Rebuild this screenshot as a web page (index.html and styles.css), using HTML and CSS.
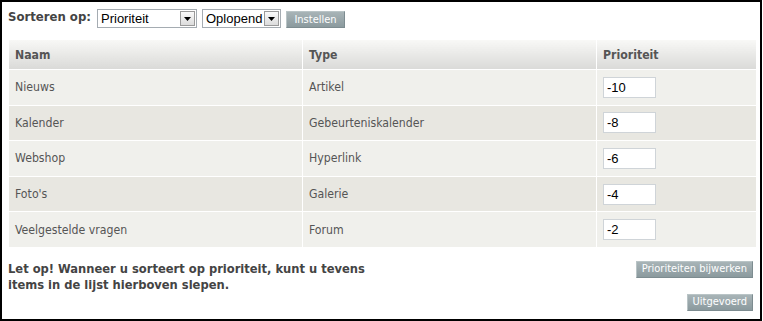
FILE: index.html
```html
<!DOCTYPE html>
<html lang="nl">
<head>
    <meta charset="UTF-8" />
    <title>Sorteren</title>
    <link rel="stylesheet" href="styles.css">
</head>
<body>

<div class="frame">
    <form class="sort-bar">
        <span class="sort-label">Sorteren op:</span>
        <div class="select select-field">
            <span class="select-value">Prioriteit</span>
            <span class="select-arrow"><svg width="7" height="4" viewBox="0 0 7 4"><path d="M0 0h7L3.5 4z" fill="#000"/></svg></span>
        </div>
        <div class="select select-order">
            <span class="select-value">Oplopend</span>
            <span class="select-arrow"><svg width="7" height="4" viewBox="0 0 7 4"><path d="M0 0h7L3.5 4z" fill="#000"/></svg></span>
        </div>
        <button type="button" class="btn">Instellen</button>
    </form>

    <table class="items">
        <thead>
            <tr>
                <th class="col-name">Naam</th>
                <th class="col-type">Type</th>
                <th class="col-prio">Prioriteit</th>
            </tr>
        </thead>
        <tbody>
            <tr>
                <td>Nieuws</td>
                <td>Artikel</td>
                <td><input type="text" value="-10"></td>
            </tr>
            <tr>
                <td>Kalender</td>
                <td>Gebeurteniskalender</td>
                <td><input type="text" value="-8"></td>
            </tr>
            <tr>
                <td>Webshop</td>
                <td>Hyperlink</td>
                <td><input type="text" value="-6"></td>
            </tr>
            <tr>
                <td>Foto's</td>
                <td>Galerie</td>
                <td><input type="text" value="-4"></td>
            </tr>
            <tr>
                <td>Veelgestelde vragen</td>
                <td>Forum</td>
                <td><input type="text" value="-2"></td>
            </tr>
        </tbody>
    </table>

    <div class="footer">
        <p class="note">Let op! Wanneer u sorteert op prioriteit, kunt u tevens items in de lijst hierboven slepen.</p>
        <div class="actions">
            <button type="button" class="btn">Prioriteiten bijwerken</button>
            <button type="button" class="btn">Uitgevoerd</button>
        </div>
    </div>
</div>

</body>
</html>
```

FILE: styles.css
```css
body {
  margin: 0;
  background: #fff;
  font-family: "DejaVu Sans Condensed", "DejaVu Sans", sans-serif;
  color: #555;
}
.frame {
  width: 758px;
  height: 317px;
  border: 2px solid #000;
}
.sort-bar {
  display: flex;
  align-items: center;
  margin: 0;
  padding: 7px 0 0 6px;
  height: 19px;
}
.sort-label {
  width: 89px;
  font-size: 13px;
  font-weight: bold;
  color: #444;
  position: relative;
  top: -2px;
}
.select {
  display: flex;
  align-items: center;
  justify-content: space-between;
  box-sizing: border-box;
  height: 19px;
  border: 1px solid #a5acb2;
  background: #fff;
  padding: 0 1px 0 3px;
  font-family: "Liberation Sans", Arial, sans-serif;
  font-size: 13px;
  color: #000;
}
.select-field {
  width: 100px;
  margin-right: 5px;
}
.select-order {
  width: 79px;
  margin-right: 5px;
}
.select-arrow {
  display: flex;
  align-items: center;
  justify-content: center;
  box-sizing: border-box;
  width: 15px;
  height: 15px;
  border: 1px solid #9a9a9a;
  background: linear-gradient(#fafafa, #dcdcdc);
}
.btn {
  font-family: "DejaVu Sans Condensed", "DejaVu Sans", sans-serif;
  font-size: 11px;
  color: #fff;
  height: 17px;
  padding: 0 5px;
  border: 1px solid;
  border-color: #b9c4c6 #7d8c90 #7d8c90 #b9c4c6;
  background: linear-gradient(#a8b4b7, #8b9a9e);
  line-height: 14px;
  cursor: pointer;
}
.sort-bar .btn {
  width: 59px;
  margin-top: 2px;
}
.items {
  margin: 12px 0 0 7px;
  width: 747px;
  border-collapse: collapse;
  font-size: 12.2px;
}
.items th {
  height: 29px;
  padding: 0 6px;
  text-align: left;
  font-size: 12.2px;
  color: #555;
  background: linear-gradient(#f8f8f6, #dadad8);
  border-left: 1px solid #fff;
}
.items td {
  height: 34.6px;
  padding: 0 6px;
  border-top: 1px solid #fff;
  border-left: 1px solid #fff;
}
.items th:first-child,
.items td:first-child {
  border-left: none;
}
.items tbody tr:nth-child(odd) td {
  background: #f0f0ec;
}
.items tbody tr:nth-child(even) td {
  background: #e8e7e1;
}
.col-name,
.col-type {
  width: 281px;
}
.items input {
  box-sizing: border-box;
  width: 53px;
  height: 21px;
  border: 1px solid #cfd4d8;
  padding: 0 3px;
  font-family: "Liberation Sans", Arial, sans-serif;
  font-size: 13px;
  color: #000;
  display: block;
}
.footer {
  display: flex;
  justify-content: space-between;
  padding: 14px 7px 0 6px;
}
.note {
  margin: 0;
  width: 380px;
  font-size: 12.8px;
  font-weight: bold;
  line-height: 16px;
  color: #444;
}
.actions {
  display: flex;
  flex-direction: column;
  align-items: flex-end;
  gap: 16px;
}
```
